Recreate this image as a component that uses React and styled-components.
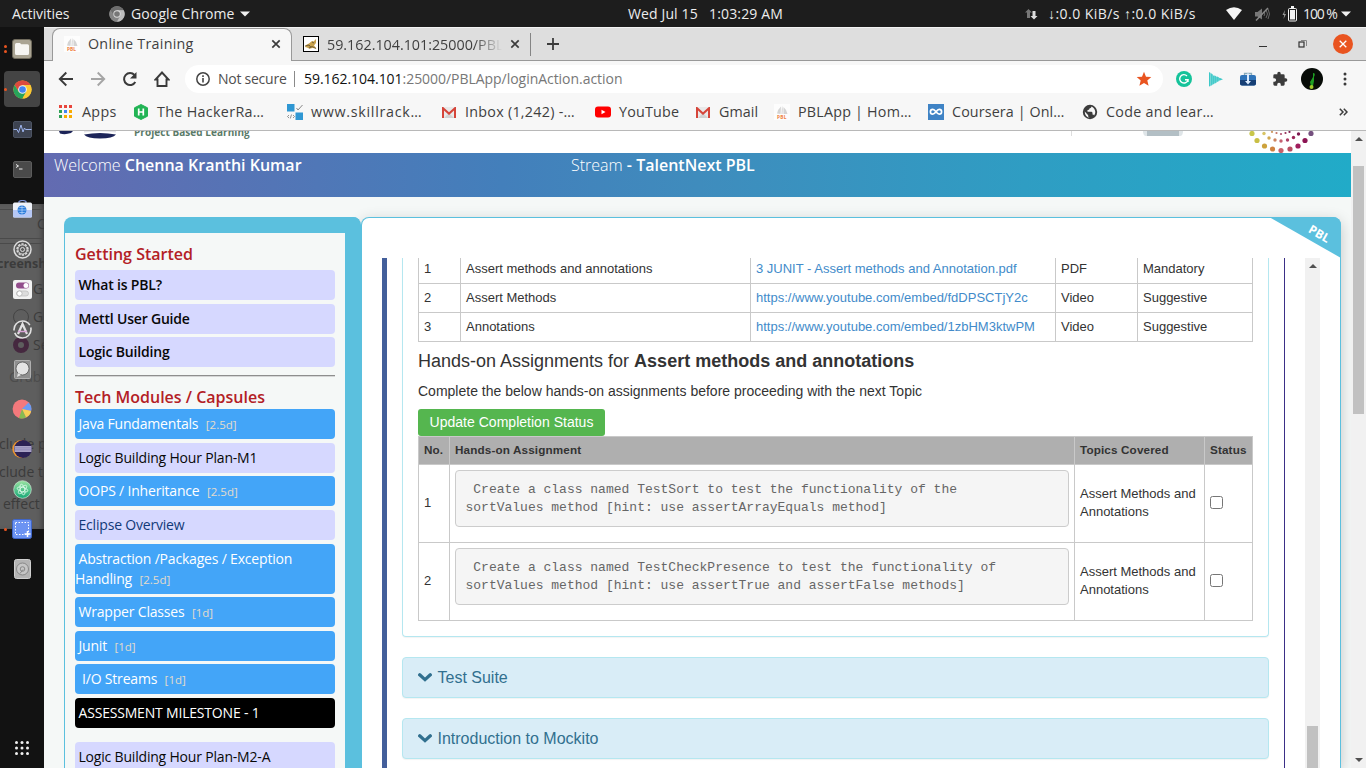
import React from "react";
import styled, { createGlobalStyle } from "styled-components";

const UI = `"Open Sans", "Noto Sans", sans-serif`;
const ARIAL = `"Liberation Sans", Arial, sans-serif`;

const Global = createGlobalStyle`
  * { box-sizing: border-box; }
  html, body { margin: 0; padding: 0; }
  body { width: 1366px; height: 768px; overflow: hidden; background: #121212; }
`;

const Desktop = styled.div`
  width: 1366px;
  height: 768px;
  display: flex;
  flex-direction: column;
  overflow: hidden;
  font-family: ${UI};
`;

/* text with a reserved width, so neighbours keep their place */
const Label = styled.span`
  flex: none;
  width: ${(p) => p.$w}px;
  white-space: pre;
  letter-spacing: ${(p) => p.$ls || 0}px;
`;

/* ---------- system bar ---------- */
const SystemBar = styled.header`
  height: 27px;
  flex: none;
  display: flex;
  align-items: center;
  background: #1d1d1d;
  color: #ececec;
  font-size: 14px;
  padding-left: 12px;
  line-height: 27px;
  svg { flex: none; display: block; }
`;
const Gap = styled.div`
  flex: none;
  width: ${(p) => p.$w}px;
`;

const Caret = () => (
  <svg width="10" height="6" viewBox="0 0 10 6"><path d="M0 .5h10L5 5.5z" fill="#f0f0f0" /></svg>
);

/* ---------- dock ---------- */
const Workspace = styled.div`
  flex: 1;
  min-height: 0;
  display: flex;
`;
const Dock = styled.nav`
  position: relative;
  width: 44px;
  flex: none;
  background: #121212;
  padding-top: 2px;
  display: flex;
  flex-direction: column;
  align-items: center;
  overflow: hidden;
`;
const DockSlot = styled.div`
  position: relative;
  width: 44px;
  height: 40px;
  flex: none;
  display: flex;
  align-items: center;
  justify-content: center;
  svg { position: relative; display: block; }
  svg[width="19"], svg[width="17"] { margin-left: 1px; }
  svg[height="17"] { margin-top: 1px; }
`;
const DockActive = styled.div`
  width: 36px;
  height: 36px;
  border-radius: 4px;
  background: #444;
  display: flex;
  align-items: center;
  justify-content: center;
`;
const RunDots = styled.div`
  position: absolute;
  left: 4px;
  top: 0;
  height: 40px;
  display: flex;
  flex-direction: column;
  justify-content: center;
  gap: 2px;
  i { width: 3px; height: 3px; border-radius: 50%; background: #e95420; }
`;
const AppsSlot = styled(DockSlot)`
  margin-top: auto;
`;
const Ghost = styled.div`
  position: absolute;
  left: 0;
  top: 177px;
  width: 44px;
  height: 325px;
  background: #5e5e5e;
  overflow: hidden;
  box-shadow: inset -4px 0 5px -2px rgba(0, 0, 0, 0.35);
`;
const GhostText = styled.span`
  position: absolute;
  left: ${(p) => p.$x}px;
  top: ${(p) => p.$y - 10}px;
  line-height: 20px;
  font-size: ${(p) => (p.$bold ? 12.5 : 14)}px;
  font-weight: ${(p) => (p.$bold ? 700 : 400)};
  color: ${(p) => p.$c || "#3b3b3b"};
  white-space: nowrap;
`;
const GhostLine = styled.i`
  position: absolute;
  left: 0;
  right: 0;
  top: ${(p) => p.$y}px;
  height: 1px;
  background: #4a4a4a;
`;
const GhostRadio = styled.i`
  position: absolute;
  left: 13px;
  top: ${(p) => p.$y}px;
  width: 16px;
  height: 16px;
  border-radius: 50%;
  border: ${(p) => (p.$on ? "5px solid #45283f" : "1px solid #444")};
`;

const Chrome = ({ s = 19, gray }) => (
  <svg width={s} height={s} viewBox="-10 -10 20 20">
    <circle r="9.6" fill={gray ? "#9a9a9a" : "#fbc52e"} />
    <path d="M-8.3-4.8A9.6 9.6 0 0 1 8.3-4.8L0-4.6-4 2.3z" fill={gray ? "#6d6d6d" : "#dd4a3e"} />
    <path d="M-8.3-4.8A9.6 9.6 0 0 0 0 9.6L4 2.3-4 2.3z" fill={gray ? "#858585" : "#27a35b"} />
    <path d="M8.3-4.8A9.6 9.6 0 0 1 0 9.6L4.2 2.2 0-4.6z" fill={gray ? "#bdbdbd" : "#fcc934"} />
    <circle r="4.6" fill={gray ? "#ddd" : "#f1f1f1"} />
    <circle r="3.5" fill={gray ? "#777" : "#4384f3"} />
  </svg>
);

const FilesIcon = () => (
  <svg width="20" height="20" viewBox="0 0 20 20">
    <rect x=".5" y=".5" width="19" height="19" rx="2.5" fill="#aaa493" stroke="#6f6a5c" />
    <path d="M3 5.500Q3 4 4.500 4H8l1.200 1.200h6.300Q17 5.200 17 6.700V14.500Q17 16 15.500 16h-11Q3 16 3 14.500z" fill="#f6f5f2" />
  </svg>
);
const MonitorIcon = () => (
  <svg width="19" height="17" viewBox="0 0 19 17">
    <rect x=".5" y=".5" width="18" height="16" rx="1.500" fill="#3d4351" stroke="#4c5362" />
    <path d="M.5 8.500H4l1.500 3L8 4l2 7 1.500-4 1 1.500h6" fill="none" stroke="#9db4ee" />
  </svg>
);
const TerminalIcon = () => (
  <svg width="19" height="17" viewBox="0 0 19 17">
    <rect x=".5" y=".5" width="18" height="16" rx="1.500" fill="#4a4a4a" stroke="#5c5c5c" />
    <path d="M3 3.500l2.500 1.500L3 6.500M6 8h3.500" fill="none" stroke="#eee" />
  </svg>
);
const StoreIcon = () => (
  <svg width="19" height="19" viewBox="0 0 19 19">
    <path d="M6 4V1.500Q9.500-.500 13 1.500V4" fill="none" stroke="#7d93d8" strokeWidth="1.200" />
    <rect x="0" y="2.500" width="19" height="15" rx="1.500" fill="#eef1f8" />
    <path d="M0 10h19v6q0 1.500-1.500 1.500h-16Q0 17.500 0 16z" fill="#b6c8f6" />
    <circle cx="9" cy="10" r="4.500" fill="#2b7ddb" />
    <path d="M4.500 10h9M9 5.500v9M6.300 7.500h5.400M6.300 12.500h5.400" stroke="#cfe2ff" strokeWidth=".6" />
  </svg>
);
const GearIcon = () => (
  <svg width="19" height="19" viewBox="0 0 19 19" fill="none" stroke="#dcdcdc">
    <circle cx="9.500" cy="9.500" r="8.500" strokeWidth="1.500" />
    <circle cx="9.500" cy="9.500" r="5.500" strokeWidth="1.500" strokeDasharray="2.200 1.250" />
    <circle cx="9.500" cy="9.500" r="4.600" />
    <circle cx="9.500" cy="9.500" r="2" />
  </svg>
);
const TweaksIcon = () => (
  <svg width="19" height="19" viewBox="0 0 19 19">
    <rect width="19" height="19" rx="2" fill="#f2f2f2" />
    <rect x="3" y="2.500" width="13" height="6" rx="3" fill="#924d8b" />
    <circle cx="13" cy="5.500" r="2.500" fill="#fff" />
    <rect x="3.500" y="11" width="12" height="5" rx="2.500" fill="#ddd" stroke="#bbb" strokeWidth=".7" />
    <circle cx="6.500" cy="13.500" r="2.600" fill="#fff" stroke="#aaa" strokeWidth=".7" />
  </svg>
);
const UpdaterIcon = () => (
  <svg width="19" height="19" viewBox="0 0 19 19" fill="none" stroke="#e2e2e2">
    <circle cx="9.500" cy="9.500" r="8.500" strokeWidth="1.600" strokeDasharray="23 2.500" />
    <path d="M5 14l4.500-10L14 14" strokeWidth="2.200" />
    <path d="M5 11.500h9" stroke="#d9a5d5" strokeWidth="1.500" />
  </svg>
);
const ChatIcon = () => (
  <svg width="17" height="19" viewBox="0 0 17 19">
    <rect x=".5" y=".5" width="16" height="18" rx="1" fill="#8f8f8f" stroke="#b0b0b0" />
    <circle cx="8.500" cy="8.500" r="6.500" fill="#e4e4e4" stroke="#555" strokeWidth=".8" />
    <path d="M4 13l-1 4 4-2z" fill="#e4e4e4" />
  </svg>
);
const PieIcon = () => (
  <svg width="20" height="20" viewBox="-10 -10 20 20">
    <circle r="9.400" fill="#f4797c" />
    <path d="M0 0L6.600-6.600A9.400 9.400 0 0 1 9.200 2z" fill="#6b9cf2" />
    <path d="M0 0L9.200 2A9.400 9.400 0 0 1 4 8.500z" fill="#f7cf56" />
    <path d="M0 0L4 8.500A9.400 9.400 0 0 1-3 8.900z" fill="#86bb52" />
  </svg>
);
const EclipseIcon = () => (
  <svg width="20" height="20" viewBox="0 0 20 20">
    <circle cx="9.300" cy="10" r="9" fill="#f0962e" />
    <circle cx="11" cy="10" r="9" fill="#2c2255" />
    <path d="M2.500 7h17v6h-17z" fill="#aaa3c6" />
    <path d="M2.500 8.800h17M2.500 10.800h17" stroke="#8d85b5" strokeWidth=".8" />
  </svg>
);
const AtomIcon = () => (
  <svg width="19" height="19" viewBox="-9.500 -9.500 19 19">
    <defs>
      <linearGradient id="atom" x1="0" y1="0" x2="0" y2="1"><stop stopColor="#9ae3a2" /><stop offset="1" stopColor="#17a877" /></linearGradient>
    </defs>
    <circle r="8.800" fill="url(#atom)" stroke="#cfe8d6" strokeWidth=".7" />
    <g fill="none" stroke="#e9fff2" strokeWidth=".7">
      <ellipse rx="5.500" ry="2.200" transform="rotate(15)" /><ellipse rx="5.500" ry="2.200" transform="rotate(75)" /><ellipse rx="5.500" ry="2.200" transform="rotate(135)" />
    </g>
  </svg>
);
const ShotIcon = () => (
  <svg width="20" height="20" viewBox="0 0 20 20">
    <rect x=".5" y=".5" width="19" height="19" rx="2" fill="#6c93f2" stroke="#3f65c6" />
    <rect x="3.500" y="3.500" width="13" height="12" fill="none" stroke="#fff" strokeDasharray="1.500 1.500" />
    <path d="M15.500 12v6M12.500 15h6" stroke="#fff" strokeWidth="1.500" />
  </svg>
);
const DiskIcon = () => (
  <svg width="17" height="20" viewBox="0 0 17 20">
    <rect x=".5" y=".5" width="16" height="19" rx="2" fill="#b4b4b4" stroke="#d0d0d0" />
    <circle cx="8.500" cy="10" r="6" fill="#c6c6c6" stroke="#888" />
    <circle cx="8.500" cy="10" r="2.300" fill="none" stroke="#888" />
    <path d="M6 14.500l3-4" stroke="#888" />
  </svg>
);
const GridIcon = () => (
  <svg width="14" height="14" viewBox="0 0 14 14" fill="#f0f0f0">
    {[1.500, 7, 12.500].map((y) => [1.500, 7, 12.500].map((x) => <circle key={x + "-" + y} cx={x} cy={y} r="1.500" />))}
  </svg>
);

/* ---------- browser chrome ---------- */
const Browser = styled.div`
  flex: 1;
  min-width: 0;
  display: flex;
  flex-direction: column;
  background: #f7f7f7;
  color: #3f3f3f;
  svg { flex: none; display: block; }
`;
const TabStrip = styled.div`
  height: 34px;
  flex: none;
  display: flex;
  background: #dedede;
  border-top: 1px solid #f2f2f2;
  box-shadow: inset 0 -1px 0 #999;
  padding-left: 8px;
  font-size: 14.3px;
`;
const ActiveTab = styled.div`
  width: 240px;
  height: 33px;
  display: flex;
  align-items: center;
  background: #f7f7f7;
  border: 1px solid #999;
  border-bottom: 0;
  border-radius: 8px 8px 0 0;
  padding: 0 0 3px 11px;
`;
const Tab = styled.div`
  width: 239px;
  height: 23px;
  margin: 5px 0;
  display: flex;
  align-items: center;
  padding: 0 0 1px 11px;
  border-right: 1px solid #858585;
`;
const FadeLabel = styled(Label)`
  overflow: hidden;
  mask-image: linear-gradient(90deg, #000 84%, transparent 100%);
`;
const WindowButtons = styled.div`
  margin-left: auto;
  display: flex;
  align-items: center;
  padding-right: 13px;
  padding-bottom: 1px;
`;
const CloseButton = styled.div`
  width: 20px;
  height: 20px;
  border-radius: 50%;
  background: #e95420;
  display: flex;
  align-items: center;
  justify-content: center;
`;
const Toolbar = styled.div`
  height: 36px;
  flex: none;
  display: flex;
  align-items: center;
  padding-left: 14px;
`;
const Omnibox = styled.div`
  width: 978px;
  height: 28px;
  border-radius: 14px;
  background: #fff;
  display: flex;
  align-items: center;
  padding: 0 11px 1px 11px;
  font-size: 14px;
  color: #4f4f4f;
  b { font-weight: 400; color: #111; }
  em { font-style: normal; color: #777; }
`;
const OmniDivider = styled.i`
  width: 1px;
  height: 16px;
  background: #8a8a8a;
  margin-right: 9px;
`;
const Bookmarks = styled.div`
  height: 34px;
  flex: none;
  display: flex;
  align-items: center;
  padding-left: 14px;
  padding-bottom: 4px;
  border-bottom: 1px solid #b8b8b8;
  font-size: 14.3px;
`;
const Bookmark = styled.div`
  width: ${(p) => p.$w}px;
  flex: none;
  display: flex;
  align-items: center;
  gap: 8px;
  white-space: nowrap;
  letter-spacing: ${(p) => p.$ls || 0}px;
`;

const PblIcon = () => (
  <svg width="16" height="16" viewBox="0 0 16 16">
    <rect width="16" height="16" fill="#fdfdfd" />
    <path d="M3 9.500Q4 5 7 2.500L6.500 10zM8 1.500Q9.500 5 8.500 10H7.500zM9.500 3Q13 6 13.500 10H9.500z" fill="#d4d4d4" />
    <text x="3" y="15" fontFamily="Open Sans" fontWeight="700" fontSize="4.800" fill="#f08040">PBL</text>
  </svg>
);
const CatIcon = () => (
  <svg width="16" height="16" viewBox="0 0 16 16">
    <rect x=".5" y=".5" width="15" height="15" fill="#fff" stroke="#000" />
    <path d="M2 11Q3 8 6 7.500L9 5l1.500.5L13 3v4l-2 2.500 2.500 3-4-.5-3 .8L4 11.500z" fill="#c9a24c" />
    <path d="M2 10l4-1 2 2.500M9 6l2 1M6 12l3-1.500 4 2" stroke="#5a4a30" strokeWidth=".8" fill="none" />
  </svg>
);
const GmailIcon = () => (
  <svg width="16" height="16" viewBox="0 0 16 16">
    <path d="M1 3h14v11H1z" fill="#e9e9e9" />
    <path d="M3 14l5-5 5 5z" fill="#d2d2d2" />
    <path d="M1 14V3h1.200L8 8.300 13.800 3H15v11h-2V6.500L8 11 3 6.500V14z" fill="#d5453a" />
  </svg>
);
const AppsGrid = () => (
  <svg width="16" height="16" viewBox="0 0 16 16">
    {["#e8453c", "#e8453c", "#e8453c", "#30a256", "#4285f4", "#f9ab00", "#30a256", "#f9ab00", "#f9ab00"].map((c, i) => (
      <rect key={i} x={1 + (i % 3) * 5} y={1 + Math.floor(i / 3) * 5} width="3" height="3" fill={c} />
    ))}
  </svg>
);
const HackerIcon = () => (
  <svg width="16" height="16" viewBox="0 0 16 16">
    <path d="M8 .5l6.500 3.300v8.400L8 15.500l-6.500-3.300V3.800z" fill="#22b455" stroke="#22b455" strokeLinejoin="round" />
    <path d="M5.700 4.500v7M10.300 4.500v7M5.700 8h4.600" stroke="#fff" strokeWidth="1.700" />
  </svg>
);
const SkillIcon = () => (
  <svg width="16" height="16" viewBox="0 0 16 16">
    <rect y="0" width="7.500" height="7.500" fill="#2f97d3" /><rect x="8.500" y="8.500" width="7.500" height="7.500" fill="#2f97d3" />
    <path d="M9.500 4l1.500 2 4.500-5" fill="none" stroke="#888" /><path d="M2 11l-1.500 1.500L2 14M4.500 10.500l-1.200 4M6 11l1.500 1.500L6 14" fill="none" stroke="#777" strokeWidth=".8" />
  </svg>
);
const YouTubeIcon = () => (
  <svg width="16" height="16" viewBox="0 0 16 16"><rect y="2.500" width="16" height="11" rx="3" fill="#f00" /><path d="M6.500 5.700v4.600l4-2.300z" fill="#fff" /></svg>
);
const CourseraIcon = () => (
  <svg width="16" height="16" viewBox="0 0 16 16">
    <rect width="16" height="16" fill="#3f83c5" />
    <path d="M8 7.800C6.800 6.200 6 5.400 4.800 5.400a2.400 2.400 0 0 0 0 4.800C6 10.200 6.800 9.400 8 7.800S10 5.400 11.200 5.400a2.400 2.400 0 0 1 0 4.800C10 10.200 9.200 9.400 8 7.800z" fill="none" stroke="#fff" strokeWidth="1.700" />
  </svg>
);
const GlobeIcon = () => (
  <svg width="16" height="16" viewBox="0 0 16 16">
    <circle cx="8" cy="8" r="7.200" fill="#3c3c3c" />
    <path d="M9.500 2.500Q9.500 4.200 7.500 4.400 7.500 6 5.500 6v1.800h3.700q1.300 0 1.300 1.400v1.300q1.500 0 1.600.9Q13.300 10 13.300 8 13 4 9.500 2.500zM2.700 7.500l3.500 3.800v1q0 .9 1.100 1.100v.3Q3 13 2.700 7.500z" fill="#f7f7f7" />
  </svg>
);
const CloseX = () => (
  <svg width="10" height="10" viewBox="0 0 10 10"><path d="M1.300 1.300l7.400 7.400M8.700 1.300L1.300 8.700" stroke="#3c3c3c" strokeWidth="1.700" /></svg>
);

/* ---------- web page ---------- */
const Viewport = styled.div`
  flex: 1;
  min-height: 0;
  display: flex;
`;
const Page = styled.div`
  width: 1307px;
  flex: none;
  display: flex;
  flex-direction: column;
  background: #f5f8f7;
  overflow: hidden;
`;
const PageHeader = styled.div`
  height: 22px;
  flex: none;
  background: #fff;
  display: flex;
  overflow: hidden;
`;
const LogoText = styled.span`
  width: 937px;
  height: 12px;
  margin-top: -6px;
  line-height: 14px;
  font-size: 10px;
  font-weight: 700;
  letter-spacing: 0.05px;
  color: #5a7a68;
`;
const Banner = styled.div`
  height: 44px;
  flex: none;
  display: flex;
  background: linear-gradient(90deg, #636bb1, #437fbb 35%, #3f8cbd 50%, #2f9dc3 75%, #21abc8);
  color: #fff;
  font-size: 16px;
  line-height: 24px;
  padding-left: 10px;
  font-weight: 300;
  b { font-weight: 600; }
`;
const BannerCell = styled.div`
  width: 517px;
  white-space: pre;
`;
const PageBody = styled.div`
  flex: 1;
  min-height: 0;
  display: flex;
  padding: 20px 0 0 20px;
`;
const Sidebar = styled.aside`
  position: relative;
  z-index: 1;
  width: 297px;
  flex: none;
  border: solid #5bc0de;
  border-width: 16px 16px 0 1px;
  border-radius: 8px 8px 0 0;
  padding: 10px;
`;
const SideHeading = styled.h3`
  margin: ${(p) => (p.$second ? "9px 0 1.2px" : "0 0 5px")};
  font-size: 16px;
  line-height: 22px;
  font-weight: 600;
  color: #b32025;
  white-space: nowrap;
`;
const tones = {
  lilac: "#d6d8ff",
  blue: "#43a5f8",
  black: "#000",
};
const SideItem = styled.div`
  margin: ${(p) => (p.$gap ? "13.6px" : "0")} 0 3.6px;
  min-height: 30px;
  padding: 5px 0;
  border-radius: 4px;
  background: ${(p) => tones[p.$tone]};
  color: ${(p) => p.$color || (p.$tone === "lilac" ? "#080808" : "#fff")};
  font-size: 14px;
  line-height: 20px;
  letter-spacing: -0.19px;
  font-weight: ${(p) => (p.$bold ? 600 : 400)};
  text-indent: ${(p) => p.$indent || 3.5}px;
  small { font-size: 11.5px; line-height: 0; letter-spacing: 0; color: #e4dccb; margin-left: 4px; }
`;
const Rule = styled.hr`
  margin: 7.8px 0 0;
  border: 0;
  border-top: 1px solid #8e8e8e;
  height: 2px;
  background: #d5d6d6;
`;
const Main = styled.main`
  position: relative;
  width: 980px;
  flex: none;
  background: #fff;
  border: 1px solid #5bc0de;
  border-bottom: 0;
  border-radius: 8px 8px 0 0;
  box-shadow: 0 4px 15px rgba(0, 0, 0, 0.2);
  padding: 40px 0 0 20px;
  display: flex;
  font-family: ${ARIAL};
  color: #333;
`;
const Ribbon = styled.div`
  position: absolute;
  right: -1px;
  top: -1px;
  width: 72px;
  height: 41px;
  background: #5bc0de;
  clip-path: polygon(0 0, 100% 0, 100% 100%);
  border-top-right-radius: 8px;
  span {
    position: absolute;
    left: 39px;
    top: 8.5px;
    font: 700 12px/16px ${UI};
    color: #fff;
    transform: rotate(30deg);
  }
`;
const Topics = styled.div`
  width: 903px;
  flex: none;
  border-left: 5px solid #435f9b;
  border-right: 1px solid #3b2f87;
  padding: 0 15px;
  overflow: hidden;
`;
const TopicPanel = styled.section`
  border: 1px solid #b5e7f0;
  border-top: 0;
  border-radius: 0 0 4px 4px;
  box-shadow: 0 1px 1px rgba(0, 0, 0, 0.05);
  padding: 0 15px 15px;
`;
const Table = styled.table`
  width: 835px;
  table-layout: fixed;
  border-collapse: collapse;
  font-size: 13px;
  line-height: 18px;
  margin-top: ${(p) => p.$top || 0}px;
  tr { height: ${(p) => p.$row}px; }
  td, th { border: 1px solid #c9c9c9; padding: 0 5px; text-align: left; vertical-align: middle; }
  thead tr { height: 28px; }
  th { background: #afafaf; font-size: 11.7px; letter-spacing: 0.14px; white-space: nowrap; padding-bottom: 2px; }
  a { color: #428bca; }
  input { display: block; width: 13px; height: 13px; margin: 0; }
`;
const AssignmentTable = styled(Table)`
  td { padding-bottom: 2px; }
`;
const Code = styled.pre`
  width: 614px;
  height: 57px;
  margin: 5px 0 13px;
  padding: 10px 9.5px;
  border: 1px solid #ccc;
  border-radius: 4px;
  background: #f5f5f5;
  font: 13px/18px "Liberation Mono", monospace;
  color: #666;
`;
const TopicTitle = styled.h4`
  margin: 9px 0 10px;
  font-size: 18px;
  line-height: 20px;
  font-weight: 400;
`;
const Hint = styled.p`
  margin: 0 0 8px;
  font-size: 14px;
  line-height: 20px;
`;
const UpdateButton = styled.button`
  display: block;
  width: 187px;
  height: 27px;
  border: 0;
  border-radius: 3px;
  padding: 0 0 1px;
  background: #55b64f;
  color: #fff;
  font: 14px ${ARIAL};
  letter-spacing: 0.02px;
`;
const TopicBar = styled.div`
  height: 41px;
  margin-top: 20px;
  border: 1px solid #b5e7f0;
  border-radius: 4px;
  background: #d9edf7;
  box-shadow: 0 1px 1px rgba(0, 0, 0, 0.05);
  color: #31708f;
  font-size: 16px;
  display: flex;
  align-items: center;
  gap: 5.5px;
  padding-left: 15px;
`;
const Scrollbar = styled.div`
  width: 15px;
  flex: none;
  margin-left: ${(p) => p.$left || 0}px;
  background: #f1f1f1;
  display: flex;
  flex-direction: column;
  align-items: center;
  padding: 6px 0;
`;
const Thumb = styled.i`
  width: 11px;
  height: ${(p) => p.$h}px;
  flex: none;
  margin-top: ${(p) => p.$top}px;
  background: #c1c1c1;
`;
const Arrow = styled.i`
  border: 4px solid transparent;
  border-top-width: ${(p) => (p.$down ? 4 : 0)}px;
  border-bottom-width: ${(p) => (p.$down ? 0 : 4)}px;
  border-${(p) => (p.$down ? "top" : "bottom")}-color: #505050;
  margin-top: ${(p) => (p.$down ? "auto" : 0)};
`;
const Chevron = () => (
  <svg width="14" height="9" viewBox="0 0 14 9"><path d="M1.700 1.800L7 6.600l5.300-4.800" fill="none" stroke="#31708f" strokeWidth="3.300" strokeLinecap="round" /></svg>
);

const outerDots = [[1252, 133.5, "#c8c64a"], [1257, 140.5, "#c9bf45"], [1264.5, 146, "#cda23c"], [1272.5, 149, "#cf8240"], [1281, 150.5, "#c7616a"], [1290, 149, "#b84e62"], [1298, 146, "#a01d5c"], [1305, 140.5, "#8c1453"], [1311, 133.5, "#75507f"]];
const innerDots = [[1264, 133.5, "#d8c464"], [1269, 138, "#d0a850"], [1275, 140, "#cd8460"], [1281, 141, "#c46070"], [1287.5, 140, "#ad3f66"], [1293.5, 137.5, "#982457"], [1298.5, 134, "#7d1a50"], [1272, 132, "#cf9a60"], [1276.5, 133, "#c47060"], [1281, 134, "#b05070"], [1285.5, 133, "#95305a"], [1289.5, 132, "#7d2050"]];

const modules = [
  { t: "Java Fundamentals", d: "2.5d", tone: "blue" },
  { t: "Logic Building Hour Plan-M1", tone: "lilac" },
  { t: "OOPS / Inheritance", d: "2.5d", tone: "blue" },
  { t: "Eclipse Overview", tone: "lilac", color: "#123a78" },
  { t: "Abstraction /Packages / Exception Handling", d: "2.5d", tone: "blue" },
  { t: "Wrapper Classes", d: "1d", tone: "blue" },
  { t: "Junit", d: "1d", tone: "blue" },
  { t: "I/O Streams", d: "1d", tone: "blue", indent: 7 },
  { t: "ASSESSMENT MILESTONE - 1", tone: "black" },
  { t: "Logic Building Hour Plan-M2-A", tone: "lilac", gap: true },
];
const references = [
  ["1", "Assert methods and annotations", "3 JUNIT - Assert methods and Annotation.pdf", "PDF", "Mandatory"],
  ["2", "Assert Methods", "https://www.youtube.com/embed/fdDPSCTjY2c", "Video", "Suggestive"],
  ["3", "Annotations", "https://www.youtube.com/embed/1zbHM3ktwPM", "Video", "Suggestive"],
];
const assignments = [
  " Create a class named TestSort to test the functionality of the\nsortValues method [hint: use assertArrayEquals method]",
  " Create a class named TestCheckPresence to test the functionality of\nsortValues method [hint: use assertTrue and assertFalse methods]",
];
const bookmarks = [
  { i: <AppsGrid />, t: "Apps", w: 75, ls: 0.3 },
  { i: <HackerIcon />, t: "The HackerRa…", w: 154, ls: 0.33 },
  { i: <SkillIcon />, t: "www.skillrack…", w: 154, ls: 0.7 },
  { i: <GmailIcon />, t: "Inbox (1,242) -…", w: 154, ls: 0.27 },
  { i: <YouTubeIcon />, t: "YouTube", w: 100, ls: 0.2 },
  { i: <GmailIcon />, t: "Gmail", w: 79, ls: 0.1 },
  { i: <PblIcon />, t: "PBLApp | Hom…", w: 154, ls: 0.22 },
  { i: <CourseraIcon />, t: "Coursera | Onl…", w: 154, ls: 0.12 },
  { i: <GlobeIcon />, t: "Code and lear…", w: 256, ls: 0.3 },
];
const dock = [
  { i: <FilesIcon />, dots: 2 }, { i: <DockActive><Chrome /></DockActive>, dots: 1 }, { i: <MonitorIcon /> }, { i: <TerminalIcon /> },
  { i: <StoreIcon /> }, { i: <GearIcon /> }, { i: <TweaksIcon /> }, { i: <UpdaterIcon /> }, { i: <ChatIcon /> },
  { i: <PieIcon /> }, { i: <EclipseIcon /> }, { i: <AtomIcon /> }, { i: <ShotIcon />, dots: 1 }, { i: <DiskIcon /> },
];

function TopBar() {
  return (
    <SystemBar>
      <Label $w={97} $ls={-0.03}>Activities</Label>
      <Chrome s={16} gray />
      <Gap $w={6} />
      <Label $w={109} $ls={0.12}>Google Chrome</Label>
      <Caret />
      <Gap $w={378} />
      <Label $w={397} $ls={0.13}>Wed Jul 15   1:03:29 AM</Label>
      <svg width="13" height="14" viewBox="0 0 13 14"><path d="M3.500 2L0 5.500h2V11h3V5.500h2z" fill="#777" /><path d="M9 12.500L5.500 9h2V4h3v5h2z" fill="#ddd" /></svg>
      <Gap $w={10} />
      <Label $w={178} $ls={0.45}>↓:0.0 KiB/s ↑:0.0 KiB/s</Label>
      <svg width="16" height="13" viewBox="0 0 16 13"><path d="M8 13L0 3q8-5.500 16 0z" fill="#f4f4f4" /></svg>
      <Gap $w={12} />
      <svg width="16" height="14" viewBox="0 0 16 14"><path d="M1 5h2.500L8 1.500v11L3.500 9.500H1z" fill="#777" /><path d="M10 5q1.500 2 0 4M12 3q3 4 0 8M14 2q3 5 0 10" fill="none" stroke="#666" /><path d="M14 1L2 13.500" stroke="#888" strokeWidth="1.500" /></svg>
      <Gap $w={12} />
      <svg width="16" height="16" viewBox="0 0 16 16"><path d="M3 4L.5 9h1.700L1.500 13 4 8H2.300z" fill="#999" /><rect x="6.500" y="2.500" width="8" height="12.500" rx="1" fill="none" stroke="#f4f4f4" /><rect x="8" y="4" width="5" height="9.500" fill="#f4f4f4" /><path d="M9 1h3" stroke="#f4f4f4" strokeWidth="2" /></svg>
      <Gap $w={5} />
      <Label $w={38} $ls={-1.1}>100 %</Label>
      <Caret />
    </SystemBar>
  );
}

function DockBar() {
  return (
    <Dock>
      <Ghost>
        <GhostLine $y={5} /><GhostLine $y={34} /><GhostLine $y={39} />
        <GhostText $x={37} $y={20}>C</GhostText>
        <GhostText $x={-3} $y={60} $bold>creensh</GhostText>
        <GhostText $x={33} $y={85}>G</GhostText>
        <GhostRadio $y={105} /><GhostText $x={33} $y={113}>G</GhostText>
        <GhostRadio $y={133} $on /><GhostText $x={33} $y={141}>Se</GhostText>
        <GhostText $x={9} $y={173} $c="#4c4c4c">Grab</GhostText>
        <GhostText $x={-1} $y={240}>clude p</GhostText>
        <GhostText $x={-1} $y={268}>clude t</GhostText>
        <GhostText $x={3} $y={300}>effect</GhostText>
      </Ghost>
      {dock.map((d, n) => (
        <DockSlot key={n}>
          {d.dots && <RunDots>{Array.from({ length: d.dots }, (_, k) => <i key={k} />)}</RunDots>}
          {d.i}
        </DockSlot>
      ))}
      <AppsSlot><GridIcon /></AppsSlot>
    </Dock>
  );
}

function BrowserChrome() {
  return (
    <>
      <TabStrip>
        <ActiveTab>
          <PblIcon /><Gap $w={8} />
          <Label $w={183} $ls={0.25}>Online Training</Label>
          <CloseX />
        </ActiveTab>
        <Tab>
          <CatIcon /><Gap $w={8} />
          <FadeLabel $w={175}>59.162.104.101:25000/PBLApp</FadeLabel>
          <Gap $w={8} /><CloseX />
        </Tab>
        <svg width="44" height="33" viewBox="0 0 44 33"><path d="M22 10v12M16 16h12" stroke="#3c3c3c" strokeWidth="1.800" /></svg>
        <WindowButtons>
          <svg width="10" height="10" viewBox="0 0 10 10"><path d="M1 7.500h8" stroke="#333" /></svg>
          <Gap $w={30} />
          <svg width="10" height="10" viewBox="0 0 10 10" fill="none"><path d="M3 1.500h5.500V7" stroke="#888" /><rect x="1" y="3" width="5" height="5" stroke="#333" strokeWidth="1.200" /></svg>
          <Gap $w={25} />
          <CloseButton><svg width="8" height="8" viewBox="0 0 8 8"><path d="M.7.7l6.600 6.600M7.300.7L.7 7.300" stroke="#fff" strokeWidth="1.300" /></svg></CloseButton>
        </WindowButtons>
      </TabStrip>
      <Toolbar>
        <svg width="16" height="16" viewBox="0 0 16 16" fill="none" stroke="#3a3a3a" strokeWidth="1.900"><path d="M15 8H2M8.300 1.500L1.800 8l6.500 6.500" /></svg>
        <Gap $w={16} />
        <svg width="16" height="16" viewBox="0 0 16 16" fill="none" stroke="#a5a5a5" strokeWidth="1.900"><path d="M1 8h13M7.700 1.500L14.200 8l-6.500 6.500" /></svg>
        <Gap $w={16} />
        <svg width="16" height="16" viewBox="0 0 16 16"><path d="M13.300 11A6 6 0 1 1 12.500 4" fill="none" stroke="#3a3a3a" strokeWidth="2" /><path d="M14.500 1v6.500H8z" fill="#3a3a3a" /></svg>
        <Gap $w={16} />
        <svg width="16" height="16" viewBox="0 0 16 16"><path d="M8 1.500L1.500 8.500H3.500V15h9V8.500h2z" fill="none" stroke="#3a3a3a" strokeWidth="1.900" /></svg>
        <Gap $w={15} />
        <Omnibox>
          <svg width="14" height="14" viewBox="0 0 14 14"><circle cx="7" cy="7" r="6.200" fill="none" stroke="#444" strokeWidth="1.500" /><path d="M7 6v4.500M7 3.200v1.700" stroke="#444" strokeWidth="1.600" /></svg>
          <Gap $w={8} />
          <Label $w={76} $ls={-0.25}>Not secure</Label>
          <OmniDivider />
          <Label $w={832} $ls={-0.04}><b>59.162.104.101</b><em>:25000/PBLApp/loginAction.action</em></Label>
          <svg width="16" height="16" viewBox="0 0 16 16"><path d="M8 .8l2 4.900 5.300.4-4 3.400 1.300 5.200L8 11.900l-4.600 2.800 1.300-5.200-4-3.400L6 5.700z" fill="#e95420" /></svg>
        </Omnibox>
        <Gap $w={13} />
        <svg width="16" height="16" viewBox="0 0 16 16"><circle cx="8" cy="8" r="8" fill="#15c39a" /><path d="M11 5A4.200 4.200 0 1 0 12 8.800H9M12 8.500v2.500" fill="none" stroke="#fff" strokeWidth="1.400" /></svg>
        <Gap $w={16} />
        <svg width="16" height="16" viewBox="0 0 16 16"><path d="M1 1l1.600 1v13L1 15.500zM3.100 2.300l1.500 1v10.500l-1.500.9zM5.100 5l1.500-.5v8l-1.500 1zM7.100 4.500l1.500 1.500v5.500l-1.500 1zM9.100 5.500l1.600.7v4l-1.600.8zM11.200 6.700l3.800 1.500-3.800 1.500z" fill="#3cc8c8" /><path d="M2.600 3v11l11-6z" fill="#3cc8c8" opacity=".55" /></svg>
        <Gap $w={16} />
        <svg width="16" height="16" viewBox="0 0 16 16"><path d="M4.500 4V2.500h7V4" fill="none" stroke="#8ab" strokeWidth="1.300" /><rect y="4" width="16" height="10.500" rx="2" fill="#2f73b8" /><path d="M0 9h16v3.500q0 2-2 2H2q-2 0-2-2z" fill="#173f75" /><path d="M8 2.500v9" fill="none" stroke="#dcecff" strokeWidth="2" /><path d="M5 10h6l-3 3.500z" fill="#dcecff" /></svg>
        <Gap $w={16} />
        <svg width="16" height="16" viewBox="0 0 24 24"><path d="M20.500 11H19V7a2 2 0 0 0-2-2h-4V3.500a2.500 2.500 0 0 0-5 0V5H4a2 2 0 0 0-2 2v3.800h1.500a2.700 2.700 0 0 1 0 5.400H2V20a2 2 0 0 0 2 2h3.800v-1.500a2.700 2.700 0 0 1 5.400 0V22H17a2 2 0 0 0 2-2v-4h1.500a2.500 2.500 0 0 0 0-5z" fill="#3c3c3c" /></svg>
        <Gap $w={13} />
        <svg width="22" height="22" viewBox="0 0 22 22"><circle cx="11" cy="11" r="11" fill="#070b07" /><path d="M12 5q3 0 1 4v4l-1 5h-2l-1-4q2-3 3-5z" fill="#1d9e22" /><circle cx="10.500" cy="19" r="2" fill="#9ec92a" /></svg>
        <Gap $w={19} />
        <svg width="6" height="14" viewBox="0 0 6 14" fill="#3a3a3a"><circle cx="3" cy="2" r="1.500" /><circle cx="3" cy="7" r="1.500" /><circle cx="3" cy="12" r="1.500" /></svg>
      </Toolbar>
      <Bookmarks>
        {bookmarks.map((b, n) => (
          <Bookmark key={n} $w={b.w} $ls={b.ls}>{b.i}{b.t}</Bookmark>
        ))}
        <svg width="10" height="8" viewBox="0 0 10 8"><path d="M1.800.8L5 4 1.800 7.200M5.800.8L9 4 5.800 7.200" fill="none" stroke="#3c3c3c" strokeWidth="1.500" /></svg>
      </Bookmarks>
    </>
  );
}

function SideMenu() {
  return (
    <Sidebar>
      <SideHeading>Getting Started</SideHeading>
      {["What is PBL?", "Mettl User Guide", "Logic Building"].map((t) => (
        <SideItem key={t} $tone="lilac" $bold>{t}</SideItem>
      ))}
      <Rule />
      <SideHeading $second>Tech Modules / Capsules</SideHeading>
      {modules.map((m) => (
        <SideItem key={m.t} $tone={m.tone} $color={m.color} $gap={m.gap} $indent={m.indent}>
          {m.t}{m.d && <> <small>[{m.d}]</small></>}
        </SideItem>
      ))}
    </Sidebar>
  );
}

function TopicContent() {
  return (
    <Main>
      <Ribbon><span>PBL</span></Ribbon>
      <Topics>
        <TopicPanel>
          <Table $row={29} $top={-4}>
            <colgroup><col width="42" /><col width="290" /><col width="305" /><col width="82" /><col width="115" /></colgroup>
            <tbody>
              {references.map((r) => (
                <tr key={r[0]}><td>{r[0]}</td><td>{r[1]}</td><td><a>{r[2]}</a></td><td>{r[3]}</td><td>{r[4]}</td></tr>
              ))}
            </tbody>
          </Table>
          <TopicTitle>Hands-on Assignments for <b>Assert methods and annotations</b></TopicTitle>
          <Hint>Complete the below hands-on assignments before proceeding with the next Topic</Hint>
          <UpdateButton>Update Completion Status</UpdateButton>
          <AssignmentTable $row={78}>
            <colgroup><col width="31" /><col width="625" /><col width="130" /><col width="48" /></colgroup>
            <thead><tr><th>No.</th><th>Hands-on Assignment</th><th>Topics Covered</th><th>Status</th></tr></thead>
            <tbody>
              {assignments.map((a, n) => (
                <tr key={n}><td>{n + 1}</td><td><Code>{a}</Code></td><td>Assert Methods and Annotations</td><td><input type="checkbox" /></td></tr>
              ))}
            </tbody>
          </AssignmentTable>
        </TopicPanel>
        <TopicBar><Chevron />Test Suite</TopicBar>
        <TopicBar><Chevron />Introduction to Mockito</TopicBar>
      </Topics>
      <Scrollbar $left={20}><Arrow /><Thumb $top={458} $h={60} /></Scrollbar>
    </Main>
  );
}

export default function App() {
  return (
    <Desktop>
      <Global />
      <TopBar />
      <Workspace>
        <DockBar />
        <Browser>
          <BrowserChrome />
          <Viewport>
            <Page>
              <PageHeader>
                <svg width="90" height="22" viewBox="44 131 90 22"><path d="M59 131h14l-2 2q-6 2-11 .5z" fill="#1c2458" /><path d="M84 134.500q16-3 32 0-3 4-16 4t-16-4z" fill="#1c2458" /><path d="M84 131h32v1.500q-16-2-32 0z" fill="#e6e6ea" /></svg>
                <LogoText>Project Based Learning</LogoText>
                <svg width="280" height="22" viewBox="1071 131 280 22">
                  <path d="M1071.500 131v5" stroke="#ddd" />
                  <path d="M1143 131h40q0 5-3 5h-34q-3 0-3-5z" fill="#dfe5e8" /><path d="M1147 131h32v5h-32z" fill="#b3bfc5" />
                  {outerDots.map(([x, y, c]) => <circle key={x} cx={x} cy={y} r="2.600" fill={c} />)}
                  {innerDots.map(([x, y, c], n) => <circle key={n} cx={x} cy={y} r={n < 7 ? 1.7 : 1.1} fill={c} />)}
                </svg>
              </PageHeader>
              <Banner>
                <BannerCell>Welcome <b>Chenna Kranthi Kumar</b></BannerCell>
                <BannerCell>Stream <b>- TalentNext PBL</b></BannerCell>
              </Banner>
              <PageBody>
                <SideMenu />
                <TopicContent />
              </PageBody>
            </Page>
            <Scrollbar><Arrow /><Thumb $top={25} $h={248} /><Arrow $down /></Scrollbar>
          </Viewport>
        </Browser>
      </Workspace>
    </Desktop>
  );
}
